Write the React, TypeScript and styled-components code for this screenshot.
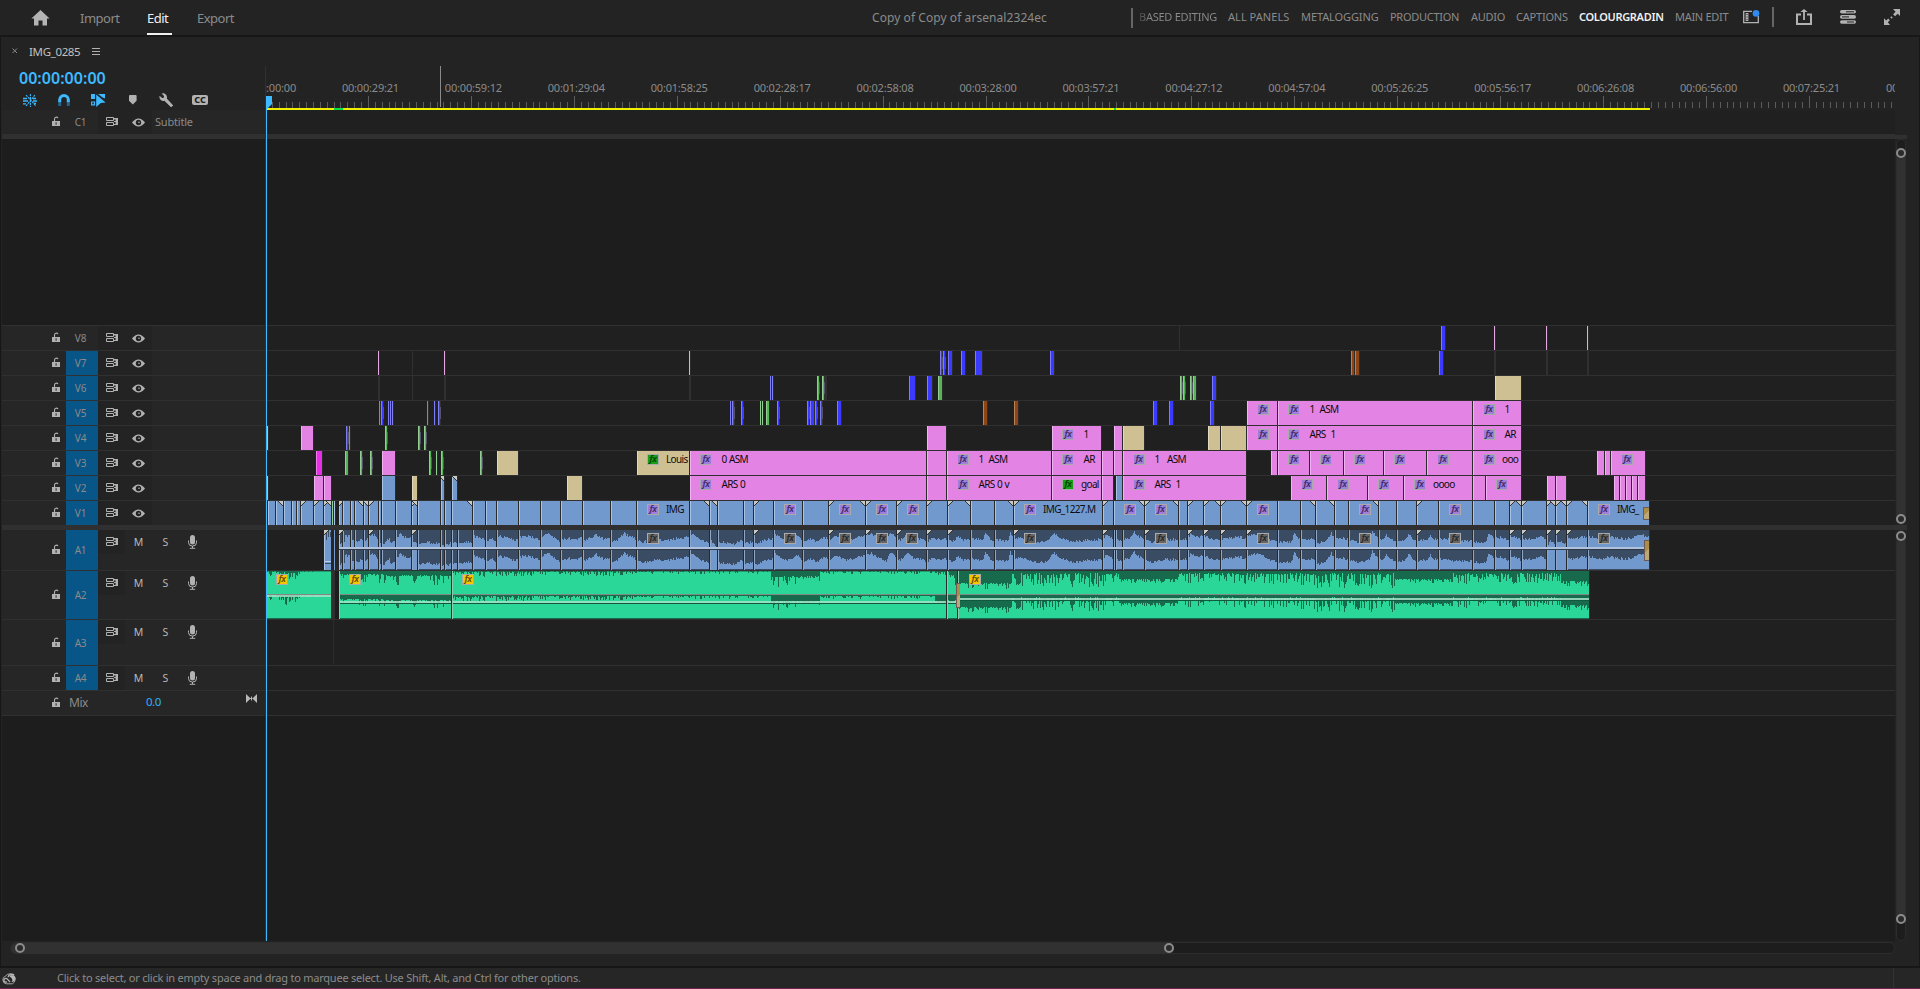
import React from "react";
import styled, { createGlobalStyle, css } from "styled-components";

const GlobalStyle = createGlobalStyle`
  *, *::before, *::after { box-sizing: border-box; }
  html, body { margin: 0; padding: 0; background: #232323; overflow: hidden; }
  body { font-family: "Noto Sans", "Open Sans", sans-serif; color: #8b8b8b; }
  svg { display: block; flex: none; }
`;

const C = {
  bar: "#232323",
  edge: "#171717",
  header: "#262626",
  lane: "#202020",
  rule: "#303030",
  empty: "#1d1d1d",
  target: "#085587",
  accent: "#3dbaff",
  icon: "#b2b2b2",
  text: "#8b8b8b",
  bright: "#f0f0f0",
};

/* screen position of the first frame on the timeline */
const LEFT = 266;

/* ---------- clip data ---------- */

type Tone = "pink" | "hot" | "tan" | "sky" | "blue" | "green" | "brown" | "line" | "ghost";
type Badge = "violet" | "lime";

interface ClipData {
  x: number;
  w: number;
  tone: Tone;
  badge?: Badge;
  label?: string;
  inset?: number;
  cut?: "l" | "r" | "lr";
}

const tones: Record<Tone, [string, string]> = {
  pink: ["#e383e3", "#efb4ef"],
  hot: ["#e72fe7", "#f07df0"],
  tan: ["#cfc093", "#e2d9bd"],
  sky: ["#7299cd", "#abc3e3"],
  blue: ["#3b3bff", "#7e7ef2"],
  green: ["#55b455", "#92cd92"],
  brown: ["#8f4614", "#b78259"],
  line: ["#e6a6e0", "#e6a6e0"],
  ghost: ["#303030", "#303030"],
};

const set = (tone: Tone, ...pairs: [number, number][]): ClipData[] =>
  pairs.map(([x, w]) => ({ x, w, tone }));
const named = (x: number, w: number, label?: string, inset = 31.5, badge: Badge = "violet", tone: Tone = "pink"): ClipData => ({
  x, w, tone, badge, label, inset,
});

const cuts = [267, 275, 283, 291, 296, 300, 313, 323, 331];
const cutsB = [
  338, 342, 350, 354, 363, 368, 378, 381, 395, 411, 417, 440, 444, 451, 472, 485, 496, 518, 540, 560, 582,
  610, 636, 689, 709, 717, 743, 753, 773, 802, 828, 865, 896, 926, 947, 970, 994, 1013, 1102, 1113, 1144,
  1178, 1187, 1203, 1220, 1246, 1277, 1300, 1315, 1334, 1348, 1378, 1396, 1416, 1438, 1472, 1494, 1509, 1521,
  1546, 1555, 1566, 1587, 1649,
];
const startMarks = [300, 313, 323, 338, 368, 411, 753, 828, 865, 896, 926, 947, 1013, 1102, 1144, 1187, 1203, 1220, 1246, 1416, 1509, 1521, 1546, 1555, 1566];
const endMarks = [283, 331, 363, 368, 417, 472, 709, 717, 865, 970, 1013, 1144, 1178, 1220, 1246, 1315, 1334, 1378, 1521, 1555, 1566, 1587];
const v1Badges = [636, 773, 828, 865, 896, 1013, 1113, 1144, 1246, 1348, 1438, 1587];
const v1Names: Record<number, string> = { 636: "IMG", 1013: "IMG_1227.M", 1587: "IMG_" };

const chain = (edges: number[]): ClipData[] =>
  edges.slice(0, -1).map((e, i) => {
    const end = edges[i + 1];
    const s = startMarks.includes(e) ? "l" : "";
    const t = endMarks.includes(end) ? "r" : "";
    return {
      x: e + 1,
      w: end - e - 1,
      tone: "sky",
      badge: v1Badges.includes(e) ? "violet" : undefined,
      label: v1Names[e],
      inset: 29,
      cut: (s + t || undefined) as ClipData["cut"],
    };
  });

const videoTracks: { id: string; on: boolean; clips: ClipData[] }[] = [
  {
    id: "V8", on: false,
    clips: [...set("ghost", [1179, 1]), ...set("blue", [1441, 4]), ...set("line", [1494, 1], [1546, 1], [1587, 1])],
  },
  {
    id: "V7", on: true,
    clips: [
      ...set("ghost", [412, 1], [1494, 2], [1546, 2], [1587, 2]),
      ...set("line", [378, 1], [444, 1], [689, 1]),
      ...set("blue", [940, 2], [943, 2], [948, 4], [961, 4], [975, 7], [1050, 4], [1439, 4]),
      ...set("brown", [1351, 3], [1355, 4]),
    ],
  },
  {
    id: "V6", on: true,
    clips: [
      ...set("ghost", [378, 2], [412, 1], [444, 2], [689, 2], [825, 2]),
      ...set("blue", [770, 1], [772, 1], [909, 6], [927, 5], [1212, 4]),
      ...set("green", [817, 2], [822, 2], [938, 4], [1180, 2], [1183, 2], [1190, 2], [1193, 3]),
      ...set("tan", [1495, 26]),
    ],
  },
  {
    id: "V5", on: true,
    clips: [
      ...set("blue", [379, 1], [381, 2], [388, 1], [390, 1], [392, 1], [427, 1], [434, 1], [438, 2], [730, 1], [732, 2],
        [741, 2], [777, 2], [807, 2], [810, 4], [815, 2], [820, 2], [837, 4], [1153, 4], [1169, 4], [1210, 4]),
      ...set("green", [760, 1], [762, 1], [766, 3]),
      ...set("brown", [983, 4], [1014, 4]),
      named(1247, 30), named(1278, 194, "1\u00a0 ASM"), named(1473, 48, "1"),
    ],
  },
  {
    id: "V4", on: true,
    clips: [
      ...set("line", [267, 1]),
      ...set("pink", [301, 12], [927, 19], [1114, 8]),
      ...set("blue", [346, 2], [349, 1]),
      ...set("green", [385, 2], [418, 2], [424, 2]),
      ...set("tan", [1123, 21], [1208, 12], [1221, 25]),
      named(1052, 49, "1"), named(1247, 30), named(1278, 194, "ARS\u00a0 1"), named(1473, 48, "AR"),
    ],
  },
  {
    id: "V3", on: true,
    clips: [
      ...set("hot", [316, 6]),
      ...set("green", [345, 3], [360, 2], [370, 2], [429, 2], [436, 1], [441, 2], [480, 2]),
      ...set("pink", [382, 13], [927, 19], [1102, 11], [1114, 8], [1271, 6], [1597, 7], [1605, 5]),
      ...set("tan", [497, 21]),
      named(637, 52, "Louis", 29, "lime", "tan"),
      named(690, 236, "0 ASM"), named(947, 104, "1\u00a0 ASM"), named(1052, 49, "AR"), named(1123, 123, "1\u00a0\u00a0 ASM"),
      named(1278, 31), named(1310, 33), named(1344, 39), named(1384, 42), named(1427, 45),
      named(1473, 48, "ooo", 29), named(1611, 34),
    ],
  },
  {
    id: "V2", on: true,
    clips: [
      ...set("sky", [267, 1], [382, 13], [1116, 6]),
      ...set("pink", [314, 9], [324, 7], [927, 19], [1102, 11], [1473, 12], [1547, 8], [1556, 10],
        [1614, 5], [1620, 5], [1626, 5], [1632, 5], [1638, 7]),
      ...set("tan", [412, 5], [567, 15]),
      { x: 441, w: 3, tone: "sky", cut: "r" },
      { x: 452, w: 5, tone: "sky", cut: "r" },
      named(690, 236, "ARS 0"), named(947, 104, "ARS 0 v"), named(1052, 49, "goal", 29, "lime"),
      named(1123, 123, "ARS\u00a0 1"), named(1291, 35), named(1327, 40), named(1368, 35),
      named(1404, 68, "oooo", 29), named(1486, 35),
    ],
  },
  {
    id: "V1", on: true,
    clips: [...chain(cuts), ...set("green", [332, 1]), ...set("sky", [334, 1]), ...chain(cutsB)],
  },
];

/* ---------- waveforms ---------- */

const noise = (n: number) => {
  const v = Math.sin(n * 127.1 + 11.7) * 43758.5453;
  return v - Math.floor(v);
};

/* loudness of the camera audio: position, height */
const speech = [
  339,5,344,5,345,12,349,13,351,7,355,7,362,8,363,6,368,9,369,13,374,13,377,10,379,4,383,3,386,8,389,9,390,5,395,6,
  396,10,400,14,405,11,411,10,412,7,418,4,425,6,439,4,444,3,451,5,462,6,472,6,473,12,477,11,484,9,486,7,492,9,496,6,
  497,10,500,12,509,9,518,8,519,11,528,12,539,9,542,12,549,14,555,9,560,7,561,8,568,10,572,8,578,9,581,10,583,8,
  590,10,596,14,600,10,609,9,612,6,618,9,624,15,628,12,632,11,636,8,640,6,652,7,657,10,662,7,680,10,689,11,690,15,
  696,11,704,7,709,6,710,8,716,1,718,6,727,5,733,4,740,8,743,8,744,4,753,6,756,4,764,8,773,9,774,14,780,10,787,8,
  797,12,802,8,803,5,808,10,816,7,821,9,826,11,829,8,836,12,845,8,856,10,865,13,871,14,878,10,886,7,890,15,896,10,
  900,8,908,15,913,10,922,9,926,6,932,10,940,8,947,9,952,6,958,12,963,8,970,9,976,9,982,7,985,16,990,8,995,8,1004,7,
  1008,8,1010,16,1014,9,1020,11,1030,7,1040,6,1048,7,1053,15,1060,10,1073,6,1088,8,1095,8,1102,9,1106,13,1113,9,1120,8,
  1130,10,1134,16,1139,11,1145,8,1152,6,1165,9,1178,8,1188,9,1190,14,1196,11,1206,12,1210,9,1220,8,1225,10,1240,11,
  1246,9,1251,14,1256,14,1262,12,1270,8,1277,6,1291,6,1294,15,1299,9,1302,9,1315,9,1316,4,1327,8,1331,15,1334,9,
  1342,10,1348,8,1357,6,1369,8,1372,16,1377,10,1383,9,1386,13,1391,8,1396,7,1404,7,1408,14,1413,9,1417,7,1426,8,
  1430,13,1434,9,1439,10,1455,7,1472,7,1485,5,1488,15,1494,9,1500,11,1509,8,1512,12,1517,10,1521,8,1530,9,1540,11,
  1546,9,1547,2,1550,7,1555,4,1560,7,1565,5,1568,10,1575,9,1580,11,1590,11,1600,9,1610,11,1624,9,1635,11,1640,13,1649,11,
];

const speechAt = (x: number) => {
  for (let i = 0; i < speech.length - 2; i += 2) {
    if (x <= speech[i + 2]) {
      const t = (x - speech[i]) / Math.max(1, speech[i + 2] - speech[i]);
      return speech[i + 1] + t * (speech[i + 3] - speech[i + 1]);
    }
  }
  return speech[speech.length - 1];
};

const speechPath = (base: number, gain: number) => {
  let d = `M339 ${base}`;
  for (let x = 339; x < 1649; x++) {
    const h = Math.round(speechAt(x) * gain + (noise(x) - 0.5) * 2.6);
    d += `V${base - Math.max(1, h)}H${x + 1}`;
  }
  return d + `V${base}Z`;
};

/* music level: from, to, quiet depth, extra depth, chance of a dip */
const music: [number, number, number, number, number][] = [
  [267, 280, 0, 8, 0.5], [280, 300, 1, 12, 0.75], [300, 331, 0, 1, 0.2],
  [339, 385, 3, 9, 0.4], [385, 452, 4, 10, 0.4],
  [452, 540, 0, 6, 0.6], [540, 640, 0, 5, 0.55], [640, 771, 0, 3, 0.45],
  [771, 820, 5, 11, 0.4], [820, 935, 0, 3, 0.4], [935, 949, 1, 3, 0.7], [949, 955, 3, 8, 0.6], [955, 958, 14, 3, 0.5],
  [958, 1012, 12, 6, 0.45], [1012, 1120, 2, 14, 0.68], [1120, 1178, 8, 4, 0.5], [1178, 1290, 2, 11, 0.6],
  [1290, 1395, 2, 15, 0.68], [1395, 1452, 8, 4, 0.5], [1452, 1562, 2, 11, 0.6], [1562, 1589, 10, 6, 0.5],
];

const musicPath = (top: number, second: boolean) => {
  let d = "";
  music.forEach(([a, b, base, amp, chance]) => {
    d += `M${a} ${top}`;
    for (let x = a; x < b; x++) {
      const hit = noise(x * 1.37) < chance ? noise(x * 3.1 + 5) : noise(x) * 0.15;
      let depth = base + amp * hit;
      if (second && x < 935) depth = depth * 0.9 + (x > 339 ? 1 : 0);
      if (second && x >= 935 && x < 957) depth = 5 + noise(x) * 3;
      d += `V${top + Math.round(depth)}H${x + 1}`;
    }
    d += `V${top}Z`;
  });
  return d;
};

/* ---------- shell ---------- */

const Screen = styled.div`
  display: flex;
  flex-direction: column;
  width: 1920px;
  height: 989px;
  background: ${C.edge};
`;

const TopBar = styled.header`
  display: flex;
  align-items: center;
  height: 35px;
  margin-bottom: 2px;
  padding-left: 31px;
  background: ${C.bar};
`;

const Modes = styled.nav`
  display: flex;
  align-self: stretch;
  gap: 25px;
  margin-left: 30px;
  width: 792px;
`;

const Mode = styled.span<{ $active?: boolean; $w: number }>`
  display: flex;
  align-items: center;
  width: ${(p) => p.$w}px;
  font-size: 13px;
  white-space: nowrap;
  letter-spacing: -0.5px;
  color: ${(p) => (p.$active ? C.bright : C.text)};
  border-bottom: 2px solid ${(p) => (p.$active ? C.bright : "transparent")};
  border-top: 2px solid transparent;
`;

const ProjectTitle = styled.h1`
  margin: 0;
  width: 259px;
  font-size: 12px;
  font-weight: 400;
  letter-spacing: 0.07px;
`;

const Separator = styled.i`
  width: 2px;
  height: 20px;
  background: #666;
`;

const Workspaces = styled.nav`
  display: flex;
  width: 610px;
  padding: 0 0 2px 6px;
`;

const Workspace = styled.span<{ $active?: boolean; $ls: number; $w: number; $fade?: boolean }>`
  width: ${(p) => p.$w}px;
  font-size: 11px;
  white-space: nowrap;
  letter-spacing: ${(p) => p.$ls}px;
  color: ${(p) => (p.$active ? C.bright : C.text)};
  font-weight: ${(p) => (p.$active ? 600 : 400)};
  ${(p) => p.$fade && css`
    background: linear-gradient(90deg, #444 0, ${C.text} 12px);
    background-clip: text;
    color: transparent;
  `}
`;

const TopIcons = styled.div`
  display: flex;
  align-items: center;
  padding-bottom: 1px;
`;

const Gap = styled.span<{ $w: number }>`
  width: ${(p) => p.$w}px;
`;

const Panel = styled.main`
  display: flex;
  flex-direction: column;
  height: 929px;
  margin: 0 1px;
  background: ${C.bar};
`;

const TabRow = styled.div`
  display: flex;
  align-items: center;
  height: 29px;
  padding: 0 0 1px 11px;
  color: #c0c0c0;
`;

const TabName = styled.span`
  width: 63px;
  margin-left: 11px;
  font-size: 11.5px;
  letter-spacing: -0.35px;
`;

const Body = styled.div`
  display: flex;
  height: 875px;
`;

const Headers = styled.section`
  width: 265px;
  background: ${C.empty};
  border-left: 1px solid ${C.bar};
  border-right: 1px solid ${C.rule};
`;

const Timecode = styled.div`
  height: 24px;
  padding-left: 17px;
  line-height: 24px;
  font-size: 16px;
  font-weight: 600;
  letter-spacing: 0.03px;
  color: ${C.accent};
  background: ${C.bar};
`;

const Tools = styled.div`
  display: flex;
  align-items: center;
  height: 20px;
  padding-left: 21px;
  background: ${C.bar};
`;

const Tool = styled.span<{ $w: number }>`
  width: ${(p) => p.$w}px;
`;

const Divider = styled.div`
  height: 5px;
  background: ${C.rule};
`;

const Void = styled.div<{ $h: number }>`
  height: ${(p) => p.$h}px;
  background: ${C.empty};
`;

const TrackHead = styled.div<{ $h: number; $line?: boolean }>`
  display: flex;
  height: ${(p) => p.$h}px;
  background: ${C.header};
  border-top: ${(p) => (p.$line ? `1px solid ${C.rule}` : "0")};
`;

const LockCell = styled.span`
  display: flex;
  align-items: center;
  width: 64px;
  padding: 0 0 1px 50px;
`;

const TrackId = styled.span<{ $on?: boolean }>`
  display: flex;
  align-items: center;
  justify-content: center;
  width: 32px;
  padding-right: 3px;
  font-size: 10px;
  letter-spacing: -0.2px;
  color: ${C.text};
  background: ${(p) => (p.$on ? C.target : "transparent")};
`;

const Toggle = styled.span<{ $w: number; $plain?: boolean }>`
  display: flex;
  align-items: center;
  justify-content: center;
  width: ${(p) => p.$w}px;
  height: 24px;
  font-size: 10.5px;
  color: #b8b8b8;
  background: ${(p) => (p.$plain ? "transparent" : C.bar)};
`;

const TrackName = styled.span`
  padding-left: 3px;
  line-height: 24px;
  font-size: 11px;
  letter-spacing: -0.2px;
`;

const MixName = styled.span`
  width: 80px;
  padding-left: 3px;
  line-height: 23px;
  font-size: 12px;
  letter-spacing: -0.5px;
`;

const MixValue = styled.span`
  width: 100px;
  line-height: 22px;
  font-size: 11.5px;
  letter-spacing: -0.5px;
  color: #2fb0fb;
`;

const MixKey = styled.span`
  padding-top: 3px;
`;

/* ---------- timeline ---------- */

const Timeline = styled.section`
  position: relative;
  width: 1629px;
  overflow: hidden;
  background: ${C.empty};
`;

const Ruler = styled.div`
  position: relative;
  height: 44px;
  background: ${C.bar};
`;

const Stamp = styled.span`
  position: absolute;
  top: 14px;
  width: 80px;
  margin-left: -40px;
  font-size: 11px;
  line-height: 16px;
  text-align: center;
  letter-spacing: -0.2px;
`;

const Tick = styled.i<{ $major?: boolean }>`
  position: absolute;
  bottom: 2px;
  width: 1px;
  height: ${(p) => (p.$major ? 12 : 6)}px;
  background: #5c5c5c;
`;

const WorkArea = styled.i<{ $green?: boolean }>`
  position: absolute;
  bottom: 0;
  height: 2px;
  background: ${(p) => (p.$green ? "#0be043" : "#f2ee00")};
`;

const HoverLine = styled.i`
  position: absolute;
  top: 0;
  left: 174px;
  width: 1px;
  height: 41px;
  background: #8a8a8a;
`;

const Playhead = styled.i`
  position: absolute;
  top: 31px;
  bottom: 0;
  left: 0;
  width: 1px;
  background: ${C.accent};
`;

const PlayheadCap = styled.svg`
  position: absolute;
  top: 30px;
  left: 0;
`;

const Lane = styled.div<{ $h: number; $line?: boolean }>`
  position: relative;
  height: ${(p) => p.$h}px;
  background: ${C.lane};
  border-top: ${(p) => (p.$line ? `1px solid ${C.rule}` : "0")};
`;

const ClipBox = styled.div<{ $tone: Tone }>`
  position: absolute;
  top: 0;
  bottom: 0;
  overflow: hidden;
  background: linear-gradient(90deg, ${(p) => tones[p.$tone][1]} 1px, ${(p) => tones[p.$tone][0]} 1px);
`;

const ClipEdge = styled.i<{ $thin: boolean }>`
  position: absolute;
  top: 0;
  bottom: 0;
  width: 1px;
  background: ${(p) => (p.$thin ? "linear-gradient(#303030 6px, #55526c 6px, #55526c 18px, #303030 18px)" : "#2b2b2b")};
`;

const badgeTone = {
  violet: ["#a07ed9", "#3b2b6a"],
  lime: ["#17a017", "#053d05"],
  gray: ["#656565", "#262626"],
  gold: ["#f7c600", "#5b4a00"],
};

const Fx = styled.span<{ $kind: keyof typeof badgeTone }>`
  position: absolute;
  top: 3px;
  width: 12px;
  height: 11px;
  border: 1px solid #aaa;
  background: ${(p) => badgeTone[p.$kind][0]};
  color: ${(p) => badgeTone[p.$kind][1]};
  font: italic 600 9px/8px "Noto Sans", sans-serif;
  text-align: center;
  letter-spacing: -0.4px;
`;

const ClipName = styled.span<{ $inset: number }>`
  position: absolute;
  top: 0;
  left: ${(p) => p.$inset}px;
  line-height: 17px;
  font-size: 10px;
  letter-spacing: -0.65px;
  word-spacing: 0.5px;
  white-space: nowrap;
  color: #0c0c0c;
`;

const Corner = styled.svg`
  position: absolute;
  top: 0;
`;

const CornerMark = ({ x, end }: { x: number; end?: boolean }) => (
  <Corner width="5" height="5" style={{ left: x }}>
    <path d={end ? "M0 0H5V5Z" : "M0 0H5L0 5Z"} fill="#c9c9c4" />
    <path d={end ? "M0 0L5 5" : "M5 0L0 5"} stroke="#333" fill="none" />
  </Corner>
);

const LaneArt = styled.svg`
  position: absolute;
  top: 0;
  left: 0;
`;

const Transition = styled.i<{ $top: number; $h: number; $w: number }>`
  position: absolute;
  top: ${(p) => p.$top}px;
  height: ${(p) => p.$h}px;
  width: ${(p) => p.$w}px;
  border: 1px solid #6d5a55;
  border-right-width: 0;
  background: linear-gradient(135deg, #ab8d48 50%, #bca77a 50%);
`;

const Clip = ({ c }: { c: ClipData }) => (
  <>
    <ClipBox $tone={c.tone} style={{ left: c.x - LEFT, width: c.w }}>
      {c.badge && <Fx $kind={c.badge} style={{ left: 10 }}>fx</Fx>}
      {c.label && <ClipName $inset={c.inset ?? 32}>{c.label}</ClipName>}
      {c.cut?.includes("l") && <CornerMark x={0} />}
      {c.cut?.includes("r") && <CornerMark x={c.w - 5} end />}
    </ClipBox>
    {c.tone !== "ghost" && (
      <ClipEdge $thin={(c.tone === "blue" || c.tone === "green") && c.w === 2} style={{ left: c.x + c.w - LEFT }} />
    )}
  </>
);

const a1Cuts = [...cutsB.slice(1, 14), 457, ...cutsB.slice(14, 40), 1115, 1122, ...cutsB.slice(40, -1)];
const a1Marks = [338, 368, 411, 753, 828, 865, 896, 926, 947, 1013, 1102, 1144, 1187, 1203, 1220, 1246, 1416, 1509, 1521, 1546, 1555, 1566];
const a1Badges = [647, 784, 839, 876, 906, 1024, 1155, 1257, 1359, 1449, 1598];

const CameraAudio = () => (
  <Lane $h={40}>
    <LaneArt width="1629" height="40" viewBox="266 0 1629 40" shapeRendering="crispEdges">
      <rect x="324" width="7" height="40" fill="#7299cd" />
      <path d="M326 0h1v10h-1zM328 0h1v7h-1zM330 2h1v5h-1z" fill="#3a4c63" />
      <path d="M325 31h6v1h-6z" fill="#c0cfe4" />
      <path d="M325 33h6v1h-6z" fill="#3a4c63" />
      <rect x="324" width="1" height="40" fill="#abc3e3" />
      <rect x="331" width="8" height="40" fill="#262626" />
      <rect x="334" width="1" height="40" fill="#7299cd" />
      <rect x="339" width="1310" height="40" fill="#3a4c63" />
      <path d={speechPath(18, 1)} fill="#7299cd" />
      <path d={speechPath(39, 1.1)} fill="#7299cd" />
      <path d="M412 20h5v20h-5zM710 20h7v20h-7zM1547 20h19v20h-19z" fill="#7299cd" />
      {a1Cuts.map((x) => (
        <React.Fragment key={x}>
          <rect x={x} width="1" height="40" fill="#26292e" />
          <rect x={x + 1} width="1" height="40" fill="#8fa6c4" />
        </React.Fragment>
      ))}
      <rect x="339" width="1" height="40" fill="#abc3e3" />
      <rect x="339" y="17" width="1310" height="2" fill="#afc1db" />
      <rect x="339" y="19" width="1310" height="1" fill="#2e3b4c" />
      <rect x="1649" width="1" height="40" fill="#303030" />
    </LaneArt>
    {a1Badges.map((x) => <Fx key={x} $kind="gray" style={{ left: x - LEFT }}>fx</Fx>)}
    {a1Marks.map((x) => <CornerMark key={x} x={x + 1 - LEFT} />)}
    <CornerMark x={58} />
    <Transition $top={10} $h={21} $w={5} style={{ left: 1644 - LEFT }} />
  </Lane>
);

const musicLine: [number, number, number][] = [[267, 331, 24], [339, 957, 30], [958, 1589, 27]];

const MusicAudio = () => (
  <Lane $h={49} $line>
    <LaneArt width="1629" height="48" viewBox="266 0 1629 48" shapeRendering="crispEdges">
      <rect x="331" width="4" height="48" fill="#303030" />
      <rect x="335" width="4" height="48" fill="#1d1d1d" />
      <path d="M267 0h64v48h-64zM339 0h1250v48h-1250z" fill="#2ad698" />
      <path d="M267 0h64v1h-64zM339 0h619v1h-619z" fill="#1f9c70" />
      <path d={musicPath(0, false)} fill="#176b4c" />
      <path d={musicPath(24, true)} fill="#176b4c" />
      <path d="M267 47h64v1h-64zM339 47h1250v1h-1250z" fill="#176b4c" />
      <path d="M267 23h64v1h-64zM339 23h1250v1h-1250z" fill="#7f8a84" />
      {musicLine.map(([a, b, y]) => (
        <React.Fragment key={a}>
          <rect x={a} y={y} width={b - a} height="2" fill="#a6e0c8" opacity="0.85" />
          {a > 300 && <rect x={a} y={y + 2} width={b - a} height="1" fill="#0f5a3e" />}
        </React.Fragment>
      ))}
      <path d="M451 0h1v48h-1zM946 0h1v48h-1zM957 0h1v48h-1zM1589 0h1v48h-1z" fill="#2b2b2b" />
      <path d="M339 0h1v48h-1zM452 0h1v48h-1zM947 0h1v48h-1zM958 0h1v48h-1z" fill="#8fc9b0" />
    </LaneArt>
    {[276, 349, 462, 969].map((x) => <Fx key={x} $kind="gold" style={{ left: x - LEFT }}>fx</Fx>)}
    <Transition $top={12} $h={25} $w={4} style={{ left: 956 - LEFT }} />
  </Lane>
);

/* ---------- scrollbars ---------- */

const VScroll = styled.aside`
  display: flex;
  flex-direction: column;
  width: 24px;
  padding-top: 69px;
  background: ${C.bar};
`;

const VDivider = styled.div<{ $h: number }>`
  width: 12px;
  height: ${(p) => p.$h}px;
  background: ${C.rule};
`;

const VTrack = styled.div<{ $h: number; $top: number; $bottom: number }>`
  display: flex;
  flex-direction: column;
  justify-content: space-between;
  align-items: center;
  width: 10px;
  height: ${(p) => p.$h}px;
  margin-left: 1px;
  padding: ${(p) => p.$top}px 0 ${(p) => p.$bottom}px;
  border-radius: 5px;
  border: 1px solid #2c2c2c;
  background: linear-gradient(${C.empty} ${(p) => p.$top + 4}px, #313131 ${(p) => p.$top + 4}px, #313131 calc(100% - ${(p) => p.$bottom + 4}px), ${C.empty} calc(100% - ${(p) => p.$bottom + 4}px));
`;

const Ring = styled.i`
  flex: none;
  width: 10px;
  height: 10px;
  border: 2px solid #8c8c8c;
  border-radius: 50%;
  background: #2a2a2a;
`;

const HScroll = styled.div`
  display: flex;
  align-items: center;
  width: 1885px;
  height: 12px;
  margin: 1px 0 0 9px;
  border: 1px solid #2d2d2d;
  border-radius: 6px;
  background: ${C.empty};
`;

const HThumb = styled.div`
  display: flex;
  align-items: center;
  justify-content: space-between;
  width: 1163px;
  height: 11px;
  padding-left: 4px;
  border-radius: 6px;
  background: #313131;
`;

const Status = styled.footer`
  display: flex;
  align-items: center;
  height: 21px;
  margin-top: 2px;
  padding-left: 2px;
  background: #262626;
  border-bottom: 1px solid #6d2250;
`;

const StatusText = styled.span`
  width: 1836px;
  margin: -2px 0 0 39px;
  font-size: 11px;
  letter-spacing: -0.23px;
`;

const StatusRule = styled.i`
  width: 1px;
  height: 20px;
  background: #333;
`;

/* ---------- icons ---------- */

const Lock = () => (
  <svg width="9" height="11" viewBox="0 0 9 11">
    <path d="M2.5 5V3A1.9 1.9 0 0 1 6 2" fill="none" stroke={C.icon} strokeWidth="1.1" />
    <path d="M0 5h8v5H0z" fill={C.icon} />
    <path d="M3.6 6.3h1v2.4h-1z" fill="#262626" />
  </svg>
);

const Sync = () => (
  <svg width="12" height="10" viewBox="0 0 12 10">
    <path d="M.5.5h7v3h-7zM.5 5.5h7v3h-7z" fill="none" stroke={C.icon} strokeWidth="1" />
    <path d="M8 1h4v7H8V7h1.6V2.6H8zM8 4h2v1H8z" fill={C.icon} />
  </svg>
);

const Eye = () => (
  <svg width="13" height="9" viewBox="0 0 13 9">
    <path d="M0 4.5Q6.5-3.4 13 4.5Q6.5 12.4 0 4.5Z" fill={C.icon} />
    <circle cx="6.5" cy="4.5" r="2.7" fill="#232323" />
    <circle cx="7" cy="4.2" r="0.8" fill={C.icon} />
  </svg>
);

const Mic = () => (
  <svg width="9" height="14" viewBox="0 0 9 14">
    <rect x="2" y="0" width="5" height="9.6" rx="2.5" fill={C.icon} />
    <path d="M.5 5.5v2a4 3.6 0 0 0 8 0v-2M4.5 11v2M1.8 13.3h5.4" fill="none" stroke={C.icon} strokeWidth="1" />
  </svg>
);

const Home = () => (
  <svg width="19" height="16" viewBox="0 0 19 16">
    <path d="M9.5 0L18.6 8.6H16V15.5H11.5V10.5H7.5V15.5H3V8.6H.4Z" fill="#b4b4b4" />
  </svg>
);

const CloudLogo = () => (
  <svg width="16" height="14" viewBox="0 0 16 14">
    <path d="M4.6 12.8A4 4 0 0 1 3.6 5A5.3 5.3 0 1 1 10.4 12.8Z" fill="none" stroke="#a8a8a8" strokeWidth="1" />
    <path d="M8 11L5.4 8.2a1.9 1.9 0 1 0-.4 2.6M6 6.2a3.7 3.7 0 0 1 6.2-2" fill="none" stroke="#b8b8b8" strokeWidth="1.2" />
    <path d="M7.4 5.4A3.4 3.4 0 1 1 9.6 10.9Q12 8 7.4 5.4Z" fill="#b8b8b8" />
  </svg>
);

const NestTool = () => (
  <svg width="15" height="13" viewBox="0 0 15 13">
    <path d="M0 4.5h4M0 7h5M0 9.8h3M10 4.5h3M10 7h4M11 9.5h2" stroke={C.accent} strokeWidth="1.3" />
    <path d="M3 1l10 11M12 1L3 12M7.4 0v13" stroke={C.accent} strokeWidth="1.1" strokeDasharray="2.2 .8" />
  </svg>
);

const Magnet = () => (
  <svg width="12" height="13" viewBox="0 0 12 13">
    <path d="M1.7 8.5V5.8a4.3 4.3 0 0 1 8.6 0v2.7" fill="none" stroke={C.accent} strokeWidth="3" />
    <path d="M.2 9h3v3h-3zM8.8 9h3v3h-3z" fill="#22648a" />
  </svg>
);

const Linked = () => (
  <svg width="15" height="13" viewBox="0 0 15 13">
    <path d="M0 0h4v5H0zM0 7.4h4v4H0z" fill={C.accent} />
    <path d="M1.2 8.6h1.6v1.6H1.2z" fill="#232323" />
    <path d="M5 0H14v4.4L11.6 3.4 7 0zM5.2 .6L14.6 8.4 9.8 9 5.2 13Z" fill={C.accent} />
  </svg>
);

const Marker = () => (
  <svg width="8" height="10" viewBox="0 0 8 10"><path d="M0 1q0-1 1-1h5.6q1 0 1 1v4.8L3.8 9.6 0 5.8z" fill={C.icon} /></svg>
);

const Wrench = () => (
  <svg width="15" height="15" viewBox="0 0 15 15">
    <path d="M2.6.6L5 3 4.8 4.8 3 5 .6 2.8A4 4 0 0 0 5.4 7.8L12 14.2 14.2 12.4 7.8 5.6A4 4 0 0 0 2.6.6Z" fill={C.icon} />
  </svg>
);

const CaptionBox = styled.span`
  display: block;
  width: 16px;
  height: 10px;
  border-radius: 2px;
  background: ${C.icon};
  color: #232323;
  font: 800 9px/10px "Noto Sans", sans-serif;
  text-align: center;
`;

const LayoutIcon = () => (
  <svg width="17" height="14" viewBox="0 0 17 14">
    <path d="M9 1.3H.7v11.4h14.6V6" fill="none" stroke={C.icon} strokeWidth="1.3" />
    <path d="M2.6 3h2.8v8H2.6z" fill={C.icon} />
    <path d="M3.5 4h1v1h-1zM3.5 6.5h1v1h-1zM3.5 9h1v1h-1z" fill="#232323" />
    <circle cx="13" cy="3.4" r="3.3" fill="#2f8cec" />
  </svg>
);

const Share = () => (
  <svg width="16" height="17" viewBox="0 0 16 17">
    <path d="M5 5.6H1V15h14V5.6h-4" fill="none" stroke={C.icon} strokeWidth="2" />
    <path d="M7.1 11V3H4.4L8 0l3.6 3H8.9v8z" fill={C.icon} />
  </svg>
);

const Sliders = () => (
  <svg width="16" height="14" viewBox="0 0 16 14">
    <rect width="16" height="3.6" rx="1.8" fill={C.icon} />
    <rect y="5.1" width="16" height="3.6" rx="1.8" fill={C.icon} />
    <rect y="10.2" width="16" height="3.6" rx="1.8" fill={C.icon} />
    <path d="M6 1.8h8M2 6.9h7M7 12h7" stroke="#232323" strokeWidth="1" />
  </svg>
);

const Expand = () => (
  <svg width="16" height="17" viewBox="0 0 16 17">
    <path d="M9 0h7v7l-2.3-2.3-2.6 2.6-2-2 2.5-2.6zM0 9.2l2.2 2.2 2-2 1.6 1.8-2 2L6 16H0z" fill={C.icon} />
    <path d="M7 9l1-1" stroke={C.icon} strokeWidth="2" />
  </svg>
);

const Bowtie = () => (
  <svg width="11" height="9" viewBox="0 0 11 9">
    <path d="M0 0L4.6 4.5 0 9zM11 0L6.4 4.5 11 9zM4 4h3v1H4z" fill="#b8b8b8" />
    <path d="M5 2.6h1v3.8H5z" fill="#b8b8b8" />
  </svg>
);

const CloseMark = () => (
  <svg width="6" height="6" viewBox="0 0 6 6"><path d="M.5.5l4.5 4.5M5 .5L.5 5" stroke="#8b8b8b" /></svg>
);

const Burger = () => (
  <svg width="8" height="7" viewBox="0 0 8 7" shapeRendering="crispEdges"><path d="M0 0h8v1H0zM0 3h8v1H0zM0 6h8v1H0z" fill="#b0b0b0" /></svg>
);

/* ---------- content ---------- */

const workspaces: { name: string; w: number; ls: number; active?: boolean; fade?: boolean }[] = [
  { name: "BASED EDITING", w: 89, ls: -0.25, fade: true },
  { name: "ALL PANELS", w: 73, ls: 0.05 },
  { name: "METALOGGING", w: 89, ls: -0.1 },
  { name: "PRODUCTION", w: 81, ls: -0.28 },
  { name: "AUDIO", w: 45, ls: -0.25 },
  { name: "CAPTIONS", w: 63, ls: -0.2 },
  { name: "COLOURGRADIN", w: 96, ls: -0.33, active: true },
  { name: "MAIN EDIT", w: 60, ls: -0.3 },
];

const stamps = [
  "00:00:00:00", "00:00:29:21", "00:00:59:12", "00:01:29:04", "00:01:58:25", "00:02:28:17", "00:02:58:08", "00:03:28:00",
  "00:03:57:21", "00:04:27:12", "00:04:57:04", "00:05:26:25", "00:05:56:17", "00:06:26:08", "00:06:56:00", "00:07:25:21",
  "00:07:55:13",
];
const STEP = 102.93;
const ticks = Array.from({ length: 238 }, (_, i) => ({ x: Math.floor(0.5 + (i * STEP) / 15), major: i % 15 === 0 })).slice(1);

const audioHeads = [
  { id: "A1", h: 40, line: false },
  { id: "A2", h: 49, line: true },
  { id: "A3", h: 46, line: true },
  { id: "A4", h: 25, line: true },
];

export default function App() {
  return (
    <Screen>
      <GlobalStyle />
      <TopBar>
        <Home />
        <Modes>
          <Mode $w={42}>Import</Mode>
          <Mode $w={25} $active>Edit</Mode>
          <Mode $w={38}>Export</Mode>
        </Modes>
        <ProjectTitle>Copy of Copy of arsenal2324ec</ProjectTitle>
        <Separator />
        <Workspaces>
          {workspaces.map((w) => (
            <Workspace key={w.name} $w={w.w} $ls={w.ls} $active={w.active} $fade={w.fade}>{w.name}</Workspace>
          ))}
        </Workspaces>
        <TopIcons>
          <LayoutIcon />
          <Gap $w={12} />
          <Separator />
          <Gap $w={22} />
          <Share />
          <Gap $w={28} />
          <Sliders />
          <Gap $w={28} />
          <Expand />
        </TopIcons>
      </TopBar>

      <Panel>
        <TabRow>
          <CloseMark />
          <TabName>IMG_0285</TabName>
          <Burger />
        </TabRow>
        <Body>
          <Headers>
            <Timecode>00:00:00:00</Timecode>
            <Tools>
              <Tool $w={35}><NestTool /></Tool>
              <Tool $w={33}><Magnet /></Tool>
              <Tool $w={38}><Linked /></Tool>
              <Tool $w={30}><Marker /></Tool>
              <Tool $w={33}><Wrench /></Tool>
              <CaptionBox>CC</CaptionBox>
            </Tools>
            <TrackHead $h={24}>
              <LockCell><Lock /></LockCell>
              <TrackId>C1</TrackId>
              <Toggle $w={27}><Sync /></Toggle>
              <Toggle $w={27}><Eye /></Toggle>
              <TrackName>Subtitle</TrackName>
            </TrackHead>
            <Divider />
            <Void $h={186} />
            {videoTracks.map((t) => (
              <TrackHead key={t.id} $h={25} $line>
                <LockCell><Lock /></LockCell>
                <TrackId $on={t.on}>{t.id}</TrackId>
                <Toggle $w={27}><Sync /></Toggle>
                <Toggle $w={27}><Eye /></Toggle>
              </TrackHead>
            ))}
            <Divider />
            {audioHeads.map((t) => (
              <TrackHead key={t.id} $h={t.h} $line={t.line}>
                <LockCell><Lock /></LockCell>
                <TrackId $on>{t.id}</TrackId>
                <Toggle $w={27}><Sync /></Toggle>
                <Toggle $w={27} $plain>M</Toggle>
                <Toggle $w={27} $plain>S</Toggle>
                <Toggle $w={27} $plain><Mic /></Toggle>
              </TrackHead>
            ))}
            <TrackHead $h={25} $line>
              <LockCell><Lock /></LockCell>
              <MixName>Mix</MixName>
              <MixValue>0.0</MixValue>
              <MixKey><Bowtie /></MixKey>
            </TrackHead>
            <Lane $h={1} $line />
          </Headers>

          <Timeline>
            <Ruler>
              {stamps.map((s, i) => (
                <Stamp key={s} style={{ left: i * STEP + 1.5 }}>{s}</Stamp>
              ))}
              {ticks.map((t) => <Tick key={t.x} $major={t.major} style={{ left: t.x - 1 }} />)}
              <WorkArea style={{ left: 1, width: 1383 }} />
              <WorkArea $green style={{ left: 68, width: 9 }} />
              <WorkArea $green style={{ left: 848, width: 2 }} />
              <HoverLine />
            </Ruler>
            <Lane $h={24} />
            <Divider />
            <Void $h={186} />
            {videoTracks.map((t) => (
              <Lane key={t.id} $h={25} $line>
                {t.clips.map((c) => <Clip key={`${c.x}-${c.tone}`} c={c} />)}
                {t.id === "V1" && <Transition $top={6} $h={13} $w={6} style={{ left: 1643 - LEFT }} />}
              </Lane>
            ))}
            <Divider />
            <CameraAudio />
            <MusicAudio />
            <Lane $h={46} $line><ClipEdge $thin={false} style={{ left: 67 }} /></Lane>
            <Lane $h={25} $line />
            <Lane $h={25} $line />
            <Lane $h={1} $line />
            <Playhead />
            <PlayheadCap width="6" height="13"><path d="M0 0h6v8L1 13H0z" fill={C.accent} /></PlayheadCap>
          </Timeline>

          <VScroll>
            <VDivider $h={4} />
            <VTrack $h={386} $top={8} $bottom={0}><Ring /><Ring /></VTrack>
            <VDivider $h={5} />
            <VTrack $h={411} $top={0} $bottom={16}><Ring /><Ring /></VTrack>
          </VScroll>
        </Body>
        <HScroll>
          <HThumb><Ring /><Ring /></HThumb>
        </HScroll>
      </Panel>

      <Status>
        <CloudLogo />
        <StatusText>Click to select, or click in empty space and drag to marquee select. Use Shift, Alt, and Ctrl for other options.</StatusText>
        <StatusRule />
      </Status>
    </Screen>
  );
}
